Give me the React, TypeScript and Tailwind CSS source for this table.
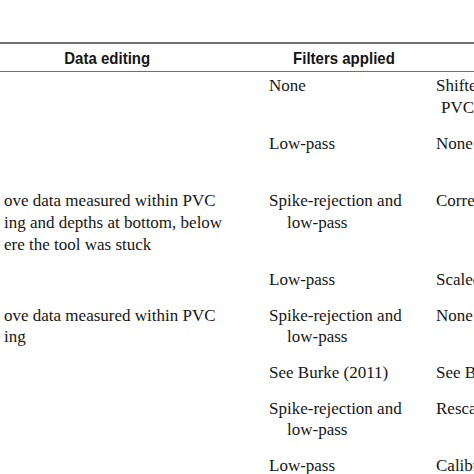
const serif = { fontFamily: '"Liberation Serif", "Times New Roman", serif' };

type Row = {
  left: string[];
  mid: string[];
  right: string[];
  lines: number;
  extra?: string;
};

const rows: Row[] = [
  { left: [], mid: ['None'], right: ['Shifted', 'PVC'], lines: 2, extra: 'pb-[15px]' },
  { left: [], mid: ['Low-pass'], right: ['None'], lines: 2 },
  {
    left: ['ove data measured within PVC', 'ing and depths at bottom, below', 'ere the tool was stuck'],
    mid: ['Spike-rejection and', 'low-pass'],
    right: ['Corrected'],
    lines: 3,
  },
  { left: [], mid: ['Low-pass'], right: ['Scaled'], lines: 1 },
  {
    left: ['ove data measured within PVC', 'ing'],
    mid: ['Spike-rejection and', 'low-pass'],
    right: ['None'],
    lines: 2,
  },
  { left: [], mid: ['See Burke (2011)'], right: ['See Burke (2011)'], lines: 1 },
  { left: [], mid: ['Spike-rejection and', 'low-pass'], right: ['Rescaled'], lines: 2 },
  { left: [], mid: ['Low-pass'], right: ['Calibrated'], lines: 1 },
];

// height of the row's text block, padding not included
const minH: Record<number, string> = {
  1: 'min-h-[21.6px]',
  2: 'min-h-[43.2px]',
  3: 'min-h-[64.8px]',
};

export default function App() {
  return (
    <div className="h-[474px] w-[474px] overflow-hidden bg-white text-[#161616]">
      <div className="h-[42px]" />
      <div className="h-[1.5px] bg-[#6f6f6f]" />
      <div
        className="flex h-[27px] items-center pt-[2px] text-[16.5px] font-bold"
        style={{ fontFamily: '"Liberation Sans", Arial, sans-serif' }}
      >
        <div className="w-[215px] text-center">
          <span className="inline-block scale-x-[0.91]">Data editing</span>
        </div>
        <div className="w-[44px]" />
        <div className="w-[170px] text-center">
          <span className="inline-block scale-x-[0.91]">Filters applied</span>
        </div>
      </div>
      <div className="h-[1.5px] bg-[#6f6f6f]" />

      <div className="pt-[3px] text-[17px] leading-[21.6px]" style={serif}>
        {rows.map((row, i) => (
          <div
            key={i}
            className={`grid grid-cols-[269px_167px_1fr] whitespace-nowrap ${row.extra ?? 'pb-[14px]'}`}
          >
            <div className={`pl-[4px] ${minH[row.lines]}`}>
              {row.left.map((t, j) => (
                <div key={j}>{t}</div>
              ))}
            </div>
            <div>
              {row.mid.map((t, j) => (
                <div key={j} className={j > 0 ? 'pl-[18px]' : ''}>
                  {t}
                </div>
              ))}
            </div>
            <div className="overflow-hidden">
              {row.right.map((t, j) => (
                <div key={j} className={j > 0 ? 'pl-[5px]' : ''}>
                  {t}
                </div>
              ))}
            </div>
          </div>
        ))}
      </div>
    </div>
  );
}
